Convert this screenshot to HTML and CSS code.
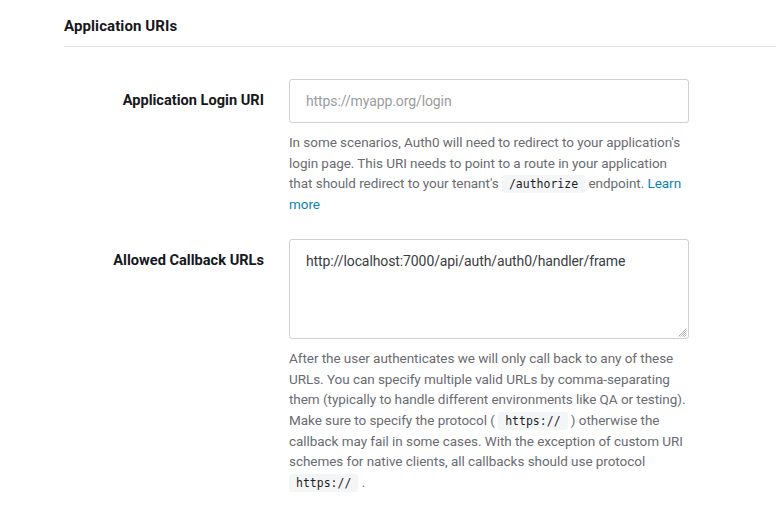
FILE: index.html
```html
<!DOCTYPE html>
<html>
<head>
<meta charset="utf-8">
<link rel="stylesheet" href="styles.css">
</head>
<body>
<div class="section">
  <div class="section-head"><h2 class="section-title">Application URIs</h2></div>
  <div class="form">
    <div class="row">
      <label class="label label-input">Application Login URI</label>
      <div class="field">
        <div class="input"><span class="placeholder">https://myapp.org/login</span></div>
        <p class="help">In some scenarios, Auth0 will need to redirect to your application's login page. This URI needs to point to a route in your application that should redirect to your tenant's <code class="code">/authorize</code> endpoint. <a class="link">Learn more</a></p>
      </div>
    </div>
    <div class="row">
      <label class="label label-area">Allowed Callback URLs</label>
      <div class="field">
        <div class="textarea"><span class="value">http://localhost:7000/api/auth/auth0/handler/frame</span>
          <svg class="grip" width="10" height="10" viewBox="0 0 10 10"><path d="M9.5 1.5L1.5 9.5M9.5 3.5L3.5 9.5M9.5 5.5L5.5 9.5M9.5 7.5L7.5 9.5" stroke="#9a9a9a" stroke-width="0.8" fill="none"/></svg>
        </div>
        <p class="help">After the user authenticates we will only call back to any of these URLs. You can specify multiple valid URLs by comma-separating them (typically to handle different environments like QA or testing). Make sure to specify the protocol ( <code class="code">https://</code> ) otherwise the callback may fail in some cases. With the exception of custom URI schemes for native clients, all callbacks should use protocol <code class="code">https://</code> .</p>
      </div>
    </div>
  </div>
</div>
</body>
</html>
```
FILE: styles.css
```css
html, body { margin: 0; padding: 0; background: #fff; }
body { font-family: Roboto, "Noto Sans", sans-serif; color: #16181d; }
.section { padding-left: 64px; }
.section-head { height: 46px; border-bottom: 1px solid #e3e3e5; display: flex; align-items: center; }
.section-title { margin: 0; font-size: 15px; font-weight: 700; letter-spacing: 0.1px; padding-top: 6px; }
.form { padding-top: 32px; display: flex; flex-direction: column; gap: 24px; }
.row { display: grid; grid-template-columns: 200px 400px; column-gap: 25px; }
.label { text-align: right; font-size: 14.6px; font-weight: 700; color: #16181d; }
.label-input { padding-top: 12px; }
.label-area { padding-top: 12px; }
.input { box-sizing: border-box; height: 44px; border: 1px solid #cfd0d3; border-radius: 3px; display: flex; align-items: center; padding-left: 16px; font-size: 14px; letter-spacing: -0.1px; }
.placeholder { color: #9a9ca1; }
.textarea { box-sizing: border-box; height: 100px; border: 1px solid #cfd0d3; border-radius: 3px; padding: 13px 16px; font-size: 14px; letter-spacing: -0.1px; position: relative; }
.value { color: #3a3c42; }
.grip { position: absolute; right: 1px; bottom: 1px; }
.help { margin: 9px 0 0; font-size: 13.5px; letter-spacing: -0.05px; line-height: 20.7px; color: #6a6c72; }
.code { display: inline-block; font-family: "DejaVu Sans Mono", monospace; font-size: 11.5px; line-height: 18px; letter-spacing: 0; background: #f4f5f7; color: #1c1e22; padding: 0 7px; border-radius: 3px; }
.link { color: #0a84ae; text-decoration: none; }
```
